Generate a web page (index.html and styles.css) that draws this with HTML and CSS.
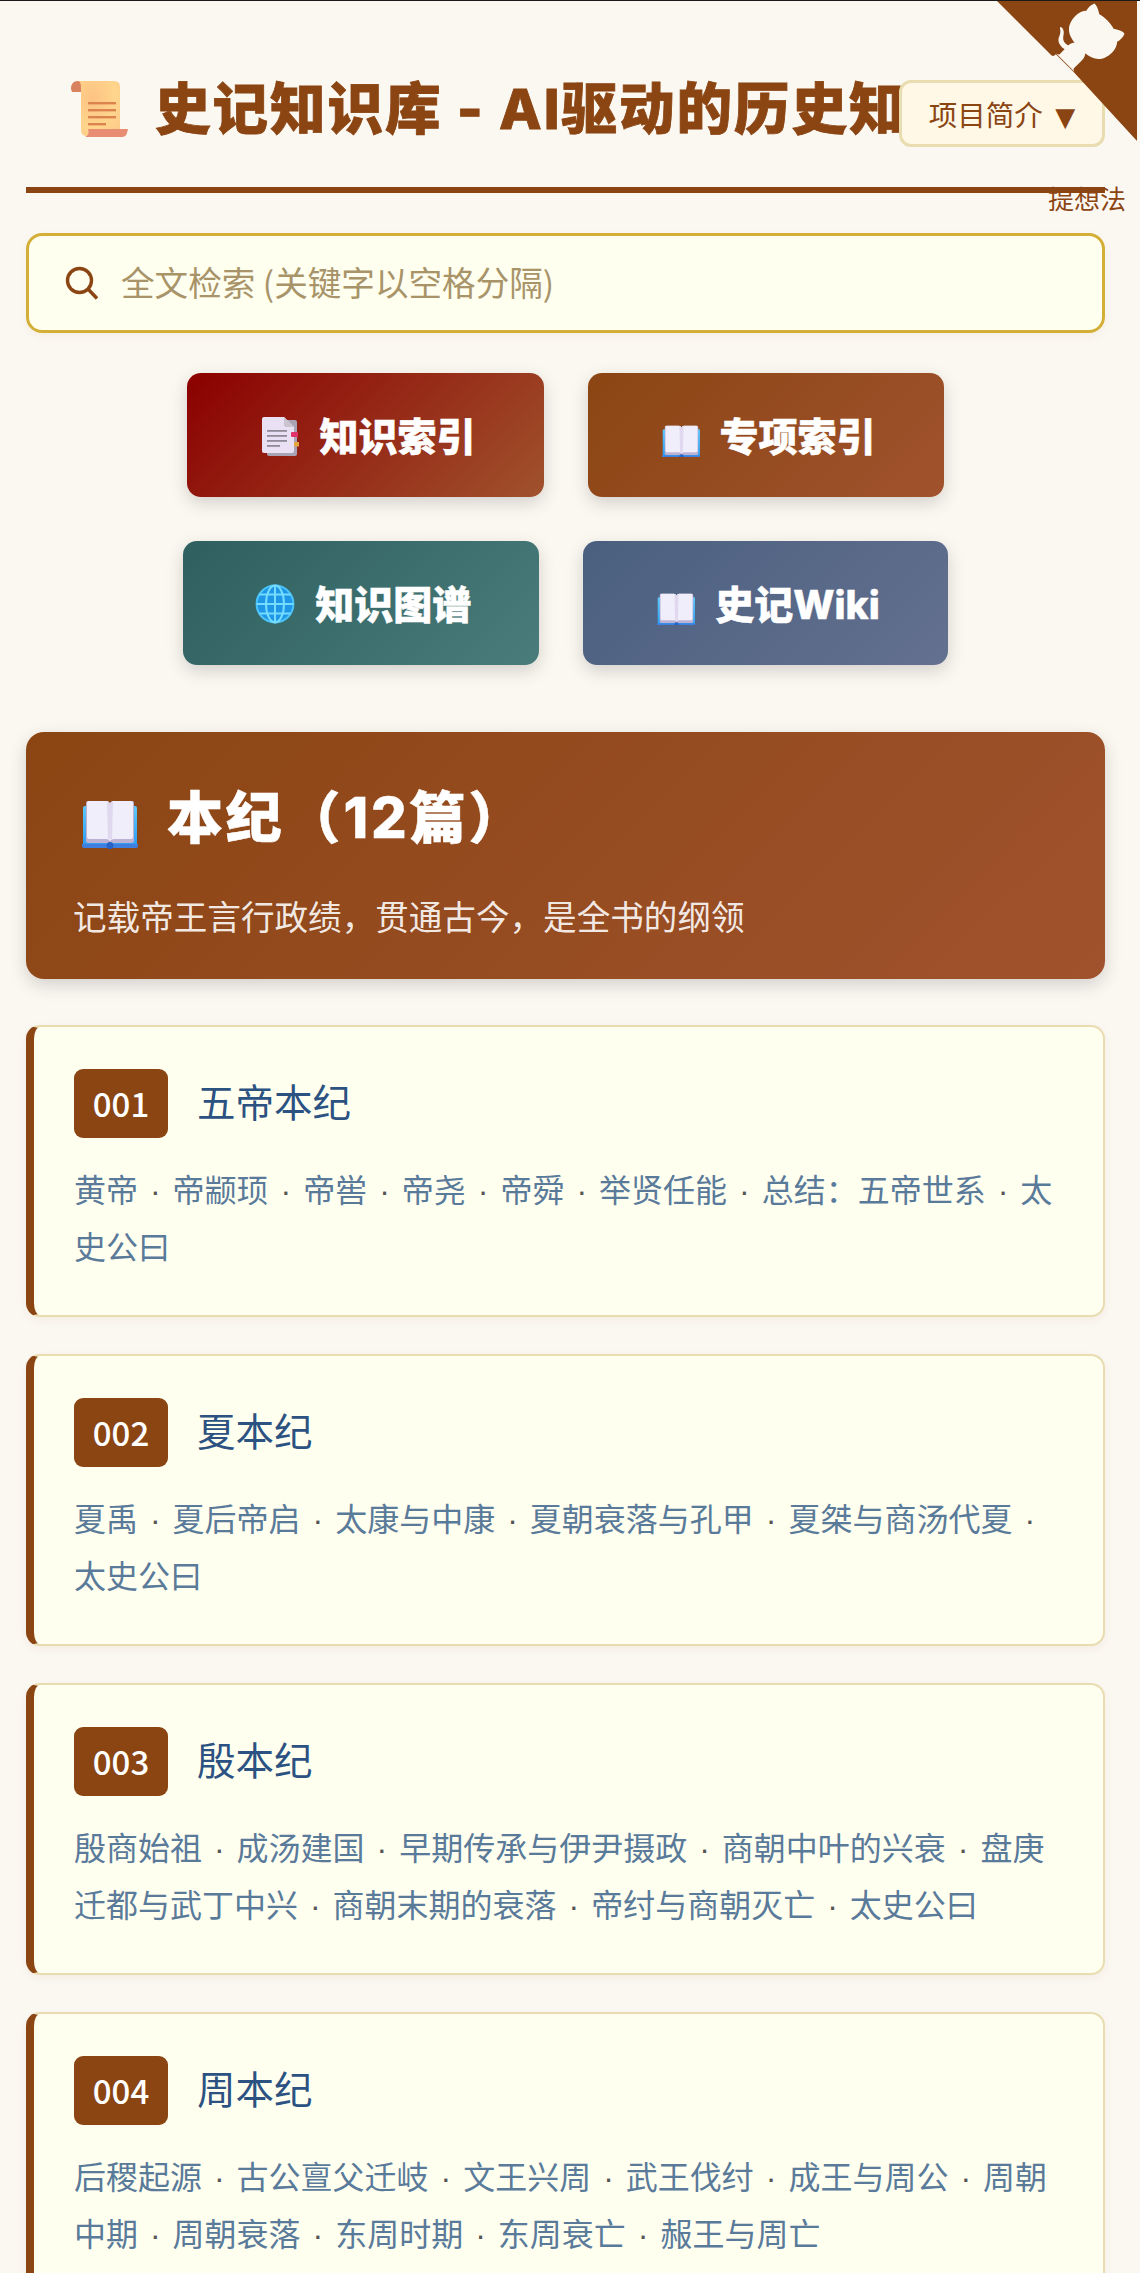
FILE: index.html
```html
<!DOCTYPE html>
<html lang="zh">
<head>
  <meta charset="utf-8">
  <title>史记知识库</title>
  <link rel="stylesheet" href="styles.css">
</head>
<body>
  <svg class="icon-defs" width="0" height="0">
    <defs>
      <linearGradient id="bookBlue" x1="0" y1="0" x2="0" y2="1">
        <stop offset="0" stop-color="#5cc8f8"/>
        <stop offset="1" stop-color="#2f9cf2"/>
      </linearGradient>
      <radialGradient id="scrollFill" cx="0.35" cy="0.3" r="0.9">
        <stop offset="0" stop-color="#fdc383"/>
        <stop offset="0.6" stop-color="#ffd58c"/>
        <stop offset="1" stop-color="#fdc98a"/>
      </radialGradient>
      <symbol id="book" viewBox="0 0 56 50">
        <path d="M1 8 Q1 6 3 6 H53 Q55 6 55 8 V46 H1 Z" fill="url(#bookBlue)"/>
        <path d="M0 44 H56 V46 Q56 48 54 48 H2 Q0 48 0 46 Z" fill="#3f7fe0"/>
        <path d="M4 3 Q4 1 6 1 H24 Q28 1 28 5 Q28 1 32 1 H50 Q52 1 52 3 V41 Q52 43 50 43 H32 L28 45 L24 43 H6 Q4 43 4 41 Z" fill="#bdb2d4"/>
        <path d="M5 3 Q5 1 7 1 H24 Q28 1 28 5 Q28 1 32 1 H49 Q51 1 51 3 V37 Q51 39 49 39 H32 Q29 39 28 41 Q27 39 24 39 H7 Q5 39 5 37 Z" fill="#f1eefb"/>
        <path d="M25 2 Q28 2 28 5 Q28 2 31 2 L30 39 H26 Z" fill="#dfd8ef"/>
        <circle cx="28" cy="45.5" r="3.5" fill="#2563c9"/>
      </symbol>
    </defs>
  </svg>

  <a class="github-corner" href="#" aria-label="GitHub">
    <svg width="140" height="140" viewBox="0 0 250 250">
      <path d="M0,0 L97,97 Q101,100 105,95 L136,126 L250,250 L250,0 Z" fill="#8b4513"/>
      <g class="octo" transform="translate(-6.25 -18) translate(128 128) scale(1.2) translate(-128 -128)">
        <path d="M128.3,109.0 C113.8,99.7 119.0,89.6 119.0,89.6 C122.0,82.7 120.5,78.6 120.5,78.6 C119.2,72.0 123.4,76.3 123.4,76.3 C127.3,80.9 125.5,87.3 125.5,87.3 C122.9,97.6 130.6,101.9 134.4,103.2"/>
        <path d="M115.0,115.0 C114.9,115.1 118.7,116.5 119.8,115.4 L133.7,101.6 C136.9,99.2 139.9,98.4 142.2,98.6 C133.8,88.0 127.5,74.4 143.8,58.0 C148.5,53.4 154.0,51.2 159.7,51.0 C160.3,49.4 163.2,43.6 171.4,40.1 C171.4,40.1 176.1,42.5 178.8,56.2 C183.1,58.6 187.2,61.8 190.9,65.4 C194.5,69.0 197.7,73.2 200.1,77.6 C213.8,80.2 216.3,84.9 216.3,84.9 C212.7,93.1 206.9,96.0 205.4,96.6 C205.1,102.4 203.0,107.8 198.3,112.5 C181.9,128.9 168.3,122.5 157.7,114.1 C157.9,116.9 156.7,120.9 152.7,124.9 L141.0,136.5 C139.8,137.7 141.6,141.9 141.8,141.8 Z"/>
      </g>
    </svg>
  </a>

  <div class="container">
    <div class="header">
      <h1 class="site-title">
        <svg class="scroll-icon" width="58" height="58" viewBox="0 0 58 58">
          <path d="M1 9 Q1 1 8 1 H14 L14 12 H2 Z" fill="#d9825f"/>
          <path d="M8 1 H44 Q50 1 50 7 V50 Q50 56 44 56 H17 Q11 56 11 50 V8 Q11 1 8 1 Z" fill="url(#scrollFill)"/>
          <path d="M18 49 H58 L57 53 Q56 57 52 57 H15 Q20 55 18 49 Z" fill="#e88d74"/>
          <rect x="18" y="22" width="28" height="2.4" fill="#dc8450"/>
          <rect x="18" y="29" width="28" height="2.4" fill="#dc8450"/>
          <rect x="18" y="36" width="28" height="2.4" fill="#dc8450"/>
          <rect x="18" y="43" width="18" height="2.4" fill="#dc8450"/>
        </svg>
        <span>史记知识库 - AI驱动的历史知</span>
      </h1>
      <button class="intro-button">项目简介 <span class="caret">▼</span></button>
      <div class="subtitle">提想法</div>
      <div class="header-rule"></div>
    </div>

    <div class="search-box">
      <svg class="search-icon" width="34" height="34" viewBox="0 0 34 34">
        <circle cx="14.5" cy="14.5" r="12" fill="none" stroke="#8b4513" stroke-width="3.4"/>
        <path d="M23.5 23.5 L32 32.5" stroke="#8b4513" stroke-width="3.4"/>
      </svg>
      <input class="search-input" type="text" placeholder="全文检索 (关键字以空格分隔)">
    </div>

    <div class="nav-buttons">
      <a class="nav-button red" href="#">
        <svg class="nav-icon" width="44" height="44" viewBox="-6 -3 44 44">
          <path d="M6 4 H34 Q36 4 36 6 V38 Q36 40 34 40 H8 Q6 40 6 38 Z" fill="#a9a4b5"/>
          <path d="M3 1 Q1 1 1 3 V35 Q1 37 3 37 H31 Q33 37 33 35 V11 L23 1 Z" fill="#e9e1f3"/>
          <path d="M23 1 L33 11 H25 Q23 11 23 9 Z" fill="#c9c4cf"/>
          <rect x="6" y="14" width="20" height="1.8" fill="#8f8b98"/>
          <rect x="6" y="19" width="20" height="1.8" fill="#8f8b98"/>
          <rect x="6" y="24" width="20" height="1.8" fill="#8f8b98"/>
          <rect x="6" y="29" width="13" height="1.8" fill="#8f8b98"/>
          <rect x="30" y="16" width="7" height="5" rx="1" fill="#e0336b"/>
          <rect x="33" y="26" width="6" height="4.5" rx="1" fill="#e6a63c"/>
        </svg>
        <span class="nav-label">知识索引</span>
      </a>
      <a class="nav-button brown" href="#">
        <svg class="nav-icon" width="44" height="44" viewBox="-6 -12 44 44"><use href="#book" width="39" height="34.8"/></svg>
        <span class="nav-label">专项索引</span>
      </a>
      <a class="nav-button teal" href="#">
        <svg class="nav-icon" width="44" height="44" viewBox="-4 -3 44 44">
          <circle cx="20" cy="20" r="19" fill="#1f97e6"/>
          <g fill="none" stroke="#74dcff" stroke-width="2">
            <circle cx="20" cy="20" r="18.4" stroke="#4cc3f9"/>
            <ellipse cx="20" cy="20" rx="9" ry="18.4"/>
            <path d="M20 1.6 V38.4 M1.6 20 H38.4 M4.4 10.5 H35.6 M4.4 29.5 H35.6"/>
          </g>
        </svg>
        <span class="nav-label">知识图谱</span>
      </a>
      <a class="nav-button slate" href="#">
        <svg class="nav-icon" width="44" height="44" viewBox="-6 -12 44 44"><use href="#book" width="39" height="34.8"/></svg>
        <span class="nav-label">史记Wiki</span>
      </a>
    </div>

    <div class="category-header">
      <h2 class="category-title">
        <svg class="category-icon" width="56" height="50"><use href="#book"/></svg>
        <span>本纪（12篇）</span>
      </h2>
      <p class="category-desc">记载帝王言行政绩，贯通古今，是全书的纲领</p>
    </div>

    <div class="chapter-list">
      <div class="chapter-card">
        <div class="chapter-head">
          <span class="chapter-num">001</span>
          <h3 class="chapter-title">五帝本纪</h3>
        </div>
        <p class="chapter-sections">黄帝<i class="sep">·</i>帝颛顼<i class="sep">·</i>帝喾<i class="sep">·</i>帝尧<i class="sep">·</i>帝舜<i class="sep">·</i>举贤任能<i class="sep">·</i>总结：五帝世系<i class="sep">·</i>太史公曰</p>
      </div>
      <div class="chapter-card">
        <div class="chapter-head">
          <span class="chapter-num">002</span>
          <h3 class="chapter-title">夏本纪</h3>
        </div>
        <p class="chapter-sections">夏禹<i class="sep">·</i>夏后帝启<i class="sep">·</i>太康与中康<i class="sep">·</i>夏朝衰落与孔甲<i class="sep">·</i>夏桀与商汤代夏<i class="sep">·</i>太史公曰</p>
      </div>
      <div class="chapter-card">
        <div class="chapter-head">
          <span class="chapter-num">003</span>
          <h3 class="chapter-title">殷本纪</h3>
        </div>
        <p class="chapter-sections">殷商始祖<i class="sep">·</i>成汤建国<i class="sep">·</i>早期传承与伊尹摄政<i class="sep">·</i>商朝中叶的兴衰<i class="sep">·</i>盘庚迁都与武丁中兴<i class="sep">·</i>商朝末期的衰落<i class="sep">·</i>帝纣与商朝灭亡<i class="sep">·</i>太史公曰</p>
      </div>
      <div class="chapter-card">
        <div class="chapter-head">
          <span class="chapter-num">004</span>
          <h3 class="chapter-title">周本纪</h3>
        </div>
        <p class="chapter-sections">后稷起源<i class="sep">·</i>古公亶父迁岐<i class="sep">·</i>文王兴周<i class="sep">·</i>武王伐纣<i class="sep">·</i>成王与周公<i class="sep">·</i>周朝中期<i class="sep">·</i>周朝衰落<i class="sep">·</i>东周时期<i class="sep">·</i>东周衰亡<i class="sep">·</i>赧王与周亡</p>
      </div>
    </div>
  </div>
</body>
</html>
```

FILE: styles.css
```css
html, body {
  height: 2273px;
  overflow: hidden;
}

body {
  margin: 0;
  border-top: 1px solid #1a1a1a;
  box-sizing: border-box;
  position: relative;
  background: #fbf8f2;
  color: #333333;
  font-family: "Noto Sans CJK SC", "Noto Sans", sans-serif;
}

.icon-defs {
  position: absolute;
}

.github-corner {
  position: absolute;
  top: 0;
  right: 3px;
  z-index: 5;
  line-height: 0;
}

.octo {
  fill: #fbf8f2;
}

.container {
  padding: 0 35px 0 26px;
}

.header {
  position: relative;
  padding-top: 74px;
}

.site-title {
  display: flex;
  align-items: center;
  gap: 27px;
  margin: 0 0 44px 44px;
  font-family: Inter, "Noto Sans CJK SC", sans-serif;
  font-size: 55.5px;
  line-height: 68px;
  font-weight: 800;
  letter-spacing: 2px;
  -webkit-text-stroke: 0.8px #8b4513;
  color: #8b4513;
  white-space: nowrap;
}

.scroll-icon {
  flex-shrink: 0;
}

.intro-button {
  position: absolute;
  top: 79px;
  right: 0;
  z-index: 4;
  width: 206px;
  height: 67px;
  padding: 0;
  box-sizing: border-box;
  background: #fff8e7;
  border: 3px solid #e8dcb0;
  border-radius: 12px;
  font-family: inherit;
  font-size: 28.5px;
  color: #8b4513;
}

.caret {
  margin-left: 6px;
  font-family: "DejaVu Sans", sans-serif;
  font-size: 26px;
}

.subtitle {
  position: absolute;
  top: 180px;
  right: -21px;
  font-size: 26px;
  line-height: 34px;
  color: #8b4513;
}

.header-rule {
  position: relative;
  height: 6px;
  background: #8b4513;
}

.search-box {
  display: flex;
  align-items: center;
  gap: 22px;
  height: 100px;
  margin: 40px 0;
  padding: 0 36px;
  box-sizing: border-box;
  background: #fffff0;
  border: 3px solid #d4af37;
  border-radius: 16px;
  box-shadow: 0 3px 10px rgba(139, 69, 19, 0.06);
}

.search-icon {
  flex-shrink: 0;
}

.search-input {
  flex: 1;
  border: none;
  outline: none;
  padding: 0 0 4px;
  background: transparent;
  font-family: inherit;
  font-size: 33.6px;
}

.search-input::placeholder {
  color: #a89468;
  opacity: 1;
}

.nav-buttons {
  display: flex;
  flex-wrap: wrap;
  justify-content: center;
  gap: 44px;
}

.nav-button {
  display: flex;
  align-items: center;
  gap: 20px;
  height: 124px;
  padding: 0 68px;
  border-radius: 14px;
  font-family: Inter, "Noto Sans CJK SC", sans-serif;
  font-size: 39px;
  font-weight: 800;
  color: #ffffff;
  text-decoration: none;
  box-shadow: 0 6px 18px rgba(0, 0, 0, 0.16);
}

.nav-label {
  padding-bottom: 3px;
  -webkit-text-stroke: 0.5px #ffffff;
}

.nav-icon {
  flex-shrink: 0;
}

.nav-button.red {
  background: linear-gradient(135deg, #8b0000, #a0522d);
}

.nav-button.brown {
  background: linear-gradient(135deg, #8b4513, #a0522d);
}

.nav-button.teal {
  background: linear-gradient(135deg, #2f5f5f, #4a7c7c);
}

.nav-button.slate {
  background: linear-gradient(135deg, #4a5f7f, #64708f);
}

.category-header {
  height: 247px;
  margin: 67px 0 46px;
  padding: 48px 47px 0;
  box-sizing: border-box;
  background: linear-gradient(135deg, #8b4513, #a0522d);
  border-radius: 18px;
  box-shadow: 0 6px 18px rgba(0, 0, 0, 0.16);
  color: #ffffff;
}

.category-title {
  display: flex;
  align-items: center;
  gap: 29px;
  margin: 0 0 36px 9px;
  font-family: Inter, "Noto Sans CJK SC", sans-serif;
  font-size: 56px;
  line-height: 76px;
  font-weight: 800;
  letter-spacing: 2.8px;
  -webkit-text-stroke: 0.5px #ffffff;
}

.category-icon {
  margin-top: 14px;
}

.category-desc {
  margin: 0;
  font-size: 33.6px;
  line-height: 48px;
  color: rgba(255, 255, 255, 0.9);
}

.chapter-list {
  display: flex;
  flex-direction: column;
  gap: 37px;
}

.chapter-card {
  flex-shrink: 0;
  height: 292px;
  padding: 42px 43px 0 40px;
  box-sizing: border-box;
  background: #fffff0;
  border: 2px solid #e8dcb0;
  border-left: 8px solid #8b4513;
  border-radius: 14px;
  box-shadow: 0 3px 10px rgba(139, 69, 19, 0.07);
}

.chapter-head {
  display: flex;
  align-items: center;
  gap: 29px;
  margin-bottom: 22px;
}

.chapter-num {
  width: 94px;
  height: 69px;
  background: #8b4513;
  border-radius: 9px;
  font-size: 33px;
  line-height: 69px;
  font-weight: 500;
  text-align: center;
  color: #ffffff;
}

.chapter-title {
  margin: 0;
  padding-bottom: 8px;
  font-size: 38.5px;
  line-height: 56px;
  font-weight: 400;
  color: #2c5282;
}

.chapter-sections {
  margin: 0;
  font-size: 32px;
  line-height: 56.5px;
  color: #5a7a9a;
}

.sep {
  display: inline-block;
  width: 34.6px;
  font-family: "Liberation Sans", sans-serif;
  font-style: normal;
  line-height: 1;
  text-align: center;
  color: #555555;
}
```
